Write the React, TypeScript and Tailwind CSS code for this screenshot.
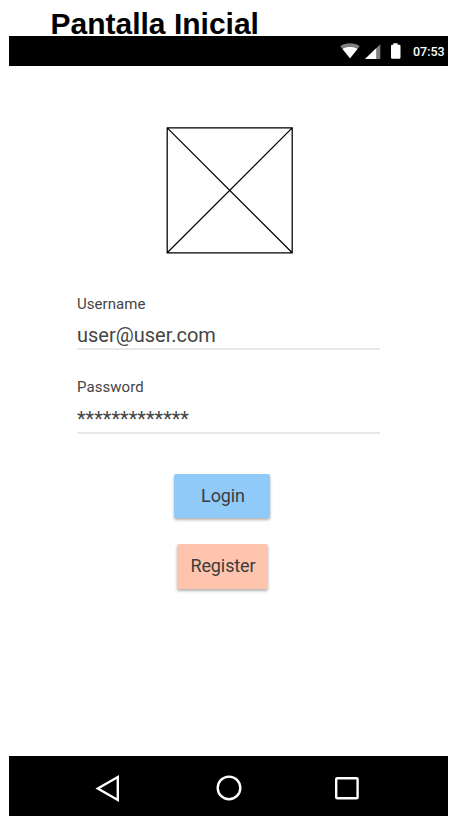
import React from "react";

function StatusBar() {
  return (
    <header className="flex h-[30px] w-full items-center justify-end bg-black pr-[3px] text-white">
      <svg width="76" height="30" viewBox="0 0 76 30" aria-hidden="true">
        <path d="M10 22.3 L0.3 10.2 C5.5 6.4 14.5 6.4 19.7 10.2 Z" fill="#808080" />
        <path d="M10 22.3 L2.6 12.9 C6.5 10.3 13.5 10.3 17.4 12.9 Z" fill="#fff" />
        <path d="M25 23 L40.3 8.3 V23 Z" fill="#808080" />
        <path d="M25 23 L36.2 12.2 V23 Z" fill="#fff" />
        <path d="M53.3 7.3 h4.4 v1.5 h1.6 q1.2 0 1.2 1.2 v11.5 q0 1.2 -1.2 1.2 h-7.1 q-1.2 0 -1.2 -1.2 v-11.5 q0 -1.2 1.2 -1.2 h1.1 Z" fill="#fff" />
      </svg>
      <span className="ml-[-3px] w-[32px] whitespace-nowrap pt-px text-[12.5px] leading-[30px] font-medium">07:53</span>
    </header>
  );
}

function Field({ label, value }: { label: string; value: string }) {
  return (
    <div className="flex w-[303px] flex-col border-b-2 border-[#e8e8e8] text-[#454545]">
      <span className="text-[15px] leading-[20px] tracking-[0.05px]">{label}</span>
      <span className="h-[35px] pt-[9px] text-[20px] leading-[26px]">{value}</span>
    </div>
  );
}

function NavBar() {
  return (
    <nav className="flex h-[60px] w-full items-center justify-center bg-black">
      <svg width="439" height="60" viewBox="0 0 439 60" fill="none" stroke="#fff" strokeWidth="2.4" aria-hidden="true">
        <path d="M88.8 32.5 L108.8 21 V44 Z" />
        <circle cx="220" cy="31.9" r="11.3" />
        <rect x="327.2" y="22.3" width="21.4" height="20" rx="1" />
      </svg>
    </nav>
  );
}

export default function App() {
  return (
    <main className="flex h-[829px] w-[461px] flex-col overflow-hidden bg-white pl-[9px] font-['Roboto',sans-serif]">
      <h1 className="h-[36px] pl-[41.5px] pt-[7px] font-['Liberation_Sans',Arial,sans-serif] text-[30px] leading-[34px] font-bold whitespace-nowrap text-black">
        Pantalla Inicial
      </h1>
      <section className="flex h-[780px] w-[439px] flex-col">
        <StatusBar />
        <div className="flex grow flex-col pl-[68px]">
          <svg className="mt-[61px] ml-[89px]" width="128" height="127" viewBox="0 0 128 127" fill="none" stroke="#000" strokeWidth="1.25" aria-hidden="true">
            <path d="M1.2 0.9 H126.2 V125.8 H1.2 Z M1.2 0.9 L126.2 125.8 M126.2 0.9 L1.2 125.8" />
          </svg>
          <div className="mt-[39px] flex flex-col gap-[27px] [&>div:first-child>span:first-child]:pt-px [&>div:first-child>span:last-child]:-mt-px">
            <Field label="Username" value="user@user.com" />
            <Field label="Password" value="*************" />
          </div>
          <div className="mt-[40px] flex w-[291px] flex-col items-center gap-[26px] text-[18px] tracking-[-0.1px] text-[#3c3c3c]">
            <button className="mr-px h-[44px] w-[96px] rounded-[2px] bg-[#90caf9] pb-[2px] pl-[2px] shadow-[0_2px_3px_rgba(0,0,0,0.3)]">Login</button>
            <button className="h-[45px] w-[91px] rounded-[2px] bg-[#ffc4ae] pb-[2px] pl-px shadow-[0_2px_3px_rgba(0,0,0,0.3)]">Register</button>
          </div>
        </div>
        <NavBar />
      </section>
    </main>
  );
}
